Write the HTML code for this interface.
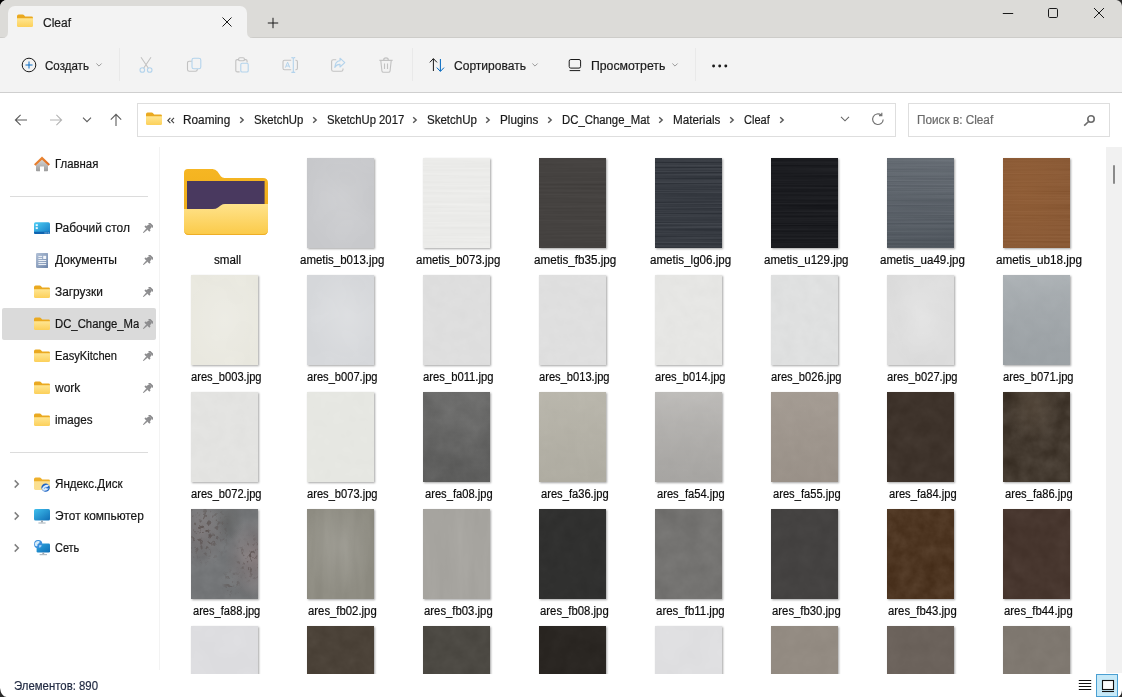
<!DOCTYPE html>
<html><head><meta charset="utf-8"><title>Cleaf</title>
<style>
*{box-sizing:border-box;margin:0;padding:0}
html,body{width:1122px;height:697px;overflow:hidden;background:#000}
body{font-family:"Liberation Sans",sans-serif;font-size:12px;color:#1b1b1b;position:relative}
.win{position:absolute;left:0;top:0;width:1122px;height:697px;background:#fff;border-radius:7px 0 0 0;overflow:hidden}
.abs{position:absolute}
.titlebar{position:absolute;left:0;top:0;width:1122px;height:38px;background:#dcdbd8;border-bottom:1px solid #cdccc9}
.tab{position:absolute;left:8px;top:6px;width:239px;height:32px;background:#f3f3f3;border-radius:7px 7px 0 0}
.toolbar{position:absolute;left:0;top:38px;width:1122px;height:54px;background:#f3f3f3}
.tbline{position:absolute;left:0;top:92px;width:1122px;height:1px;background:#cfcfcf}
.t{position:absolute;white-space:nowrap;line-height:14px;transform-origin:0 50%;-webkit-text-stroke:0.2px currentColor}
.sep{position:absolute;width:1px;background:#e9e9e9}
.addr{position:absolute;left:137px;top:103px;width:759px;height:34px;background:#fff;border:1px solid #dedede}
.search{position:absolute;left:908px;top:103px;width:202px;height:34px;background:#fff;border:1px solid #dedede}
.thumb{position:absolute;width:67px;height:90px;box-shadow:1px 1px 2px rgba(0,0,0,.36)}
.lbl{position:absolute;width:116px;text-align:center;white-space:nowrap;line-height:14px;font-size:12px;color:#111}
.side{position:absolute;white-space:nowrap;line-height:14px;font-size:12px;color:#111}
</style></head>
<body>
<div class="win">
<div class="titlebar"></div>
<div class="tab"></div>
<div class="toolbar"></div>
<div class="tbline"></div>
<svg class="abs" style="left:2px;top:32px;" width="6" height="6" viewBox="0 0 6 6"><path d="M6 0V6H0Q6 6 6 0Z" fill="#f3f3f3"/></svg>
<svg class="abs" style="left:247px;top:32px;" width="6" height="6" viewBox="0 0 6 6"><path d="M0 0V6H6Q0 6 0 0Z" fill="#f3f3f3"/></svg>
<svg class="abs" style="left:17px;top:14px;" width="16" height="14" viewBox="0 0 16 14"><defs><linearGradient id="fg" x1="0" y1="0" x2="0" y2="1"><stop offset="0" stop-color="#ffe692"/><stop offset="1" stop-color="#fcd05a"/></linearGradient></defs><path d="M0 2.2Q0 0.6 1.6 0.6H5.6Q6.6 0.6 7.3 1.5L8.2 2.6H14.6Q16 2.6 16 4V6H0Z" fill="#eaa920"/><path d="M0 4.2H16V11.7Q16 13 14.6 13H1.4Q0 13 0 11.7Z" fill="url(#fg)"/></svg>
<div class="t" style="left:42.6px;top:15.9px;font-size:12px;color:#1b1b1b;transform:scaleX(0.9994);">Cleaf</div>
<svg class="abs" style="left:221px;top:16px;" width="12" height="12" viewBox="0 0 12 12"><path d="M1.5 1.5L10.5 10.5M10.5 1.5L1.5 10.5" stroke="#1a1a1a" stroke-width="1" fill="none"/></svg>
<svg class="abs" style="left:266.5px;top:16.5px;" width="12" height="12" viewBox="0 0 12 12"><path d="M6 0.8V11.2M0.8 6H11.2" stroke="#1a1a1a" stroke-width="1" fill="none"/></svg>
<svg class="abs" style="left:1002px;top:8px;" width="12" height="12" viewBox="0 0 12 12"><path d="M0.8 5.5H11.2" stroke="#1a1a1a" stroke-width="1" fill="none"/></svg>
<svg class="abs" style="left:1047px;top:7px;" width="12" height="12" viewBox="0 0 12 12"><rect x="1.5" y="1.5" width="9" height="9" rx="1.2" stroke="#1a1a1a" stroke-width="1" fill="none"/></svg>
<svg class="abs" style="left:1093px;top:7px;" width="12" height="12" viewBox="0 0 12 12"><path d="M1 1L11 11M11 1L1 11" stroke="#1a1a1a" stroke-width="1" fill="none"/></svg>
<svg class="abs" style="left:19.5px;top:55.5px;" width="18" height="18" viewBox="0 0 18 18"><circle cx="9" cy="9" r="6.8" stroke="#1a1a1a" stroke-width="1" fill="none"/><path d="M9 5.5V12.5M5.5 9H12.5" stroke="#0a6cc4" stroke-width="1" fill="none"/></svg>
<div class="t" style="left:44.7px;top:59.0px;font-size:12px;color:#1b1b1b;transform:scaleX(0.9625);">Создать</div>
<svg class="abs" style="left:95.2px;top:62px;" width="8" height="6" viewBox="0 0 8 6"><path d="M1.4 1.5L4 4.1L6.6 1.5" stroke="#9a9a9a" stroke-width="1" fill="none"/></svg>
<div class="sep" style="left:119px;top:48px;height:33px"></div>
<svg class="abs" style="left:137px;top:56px;" width="18" height="18" viewBox="0 0 18 18"><path d="M4 1.2L11.4 12.2M14 1.2L6.6 12.2" stroke="#c2c2c2" stroke-width="1.1" fill="none"/><circle cx="5.3" cy="14" r="2.3" stroke="#b3d3ec" stroke-width="1.1" fill="none"/><circle cx="12.7" cy="14" r="2.3" stroke="#b3d3ec" stroke-width="1.1" fill="none"/></svg>
<svg class="abs" style="left:185px;top:56px;" width="18" height="18" viewBox="0 0 18 18"><path d="M6.8 5.2H4.2Q2.5 5.2 2.5 6.9V13.6Q2.5 15.3 4.2 15.3H10.6Q12.3 15.3 12.3 13.6V13" stroke="#c2c2c2" stroke-width="1.1" fill="none"/><rect x="7" y="2.2" width="8.8" height="10.6" rx="1.9" stroke="#b3d3ec" stroke-width="1.1" fill="none"/></svg>
<svg class="abs" style="left:233px;top:56px;" width="18" height="18" viewBox="0 0 18 18"><path d="M6 3.6H4.3Q2.8 3.6 2.8 5.1V14.4Q2.8 15.9 4.3 15.9H6.6M11 3.6H12.6Q14.1 3.6 14.1 5.1V6.4" stroke="#c2c2c2" stroke-width="1.1" fill="none"/><rect x="5.6" y="1.8" width="5.8" height="3" rx="1.3" stroke="#c2c2c2" stroke-width="1.1" fill="none"/><rect x="7.8" y="7.2" width="7.4" height="8.8" rx="1.3" stroke="#b3d3ec" stroke-width="1.1" fill="none"/></svg>
<svg class="abs" style="left:281px;top:56px;" width="18" height="18" viewBox="0 0 18 18"><path d="M10.2 4.2H3.6Q2 4.2 2 5.8V12.2Q2 13.8 3.6 13.8H10.2M14.4 4.2H15Q16.4 4.2 16.4 5.8V12.2Q16.4 13.8 15 13.8H14.4" stroke="#c2c2c2" stroke-width="1.1" fill="none"/><path d="M10.4 1.6H11.2Q12.3 1.6 12.3 2.8V15.2Q12.3 16.4 11.2 16.4H10.4M14.2 1.6H13.4Q12.3 1.6 12.3 2.8M14.2 16.4H13.4Q12.3 16.4 12.3 15.2" stroke="#b3d3ec" stroke-width="1.1" fill="none"/><path d="M4.4 11.6L6.6 6.2L8.8 11.6M5.1 10H8.1" stroke="#b3d3ec" stroke-width="1" fill="none"/></svg>
<svg class="abs" style="left:329px;top:56px;" width="18" height="18" viewBox="0 0 18 18"><path d="M7.2 3.8H4.4Q2.6 3.8 2.6 5.6V13.4Q2.6 15.2 4.4 15.2H12.2Q14 15.2 14 13.4V12.4" stroke="#c2c2c2" stroke-width="1.1" fill="none"/><path d="M11 2.2L15.8 6.6L11 11V8.4Q7.6 8.2 5.8 11.4Q6.2 5.2 11 4.8Z" stroke="#b3d3ec" stroke-width="1.1" fill="none" stroke-linejoin="round"/></svg>
<svg class="abs" style="left:377px;top:56px;" width="18" height="18" viewBox="0 0 18 18"><path d="M2.4 4.4H15.6M6.6 4.2Q6.6 1.9 9 1.9Q11.4 1.9 11.4 4.2M3.8 4.6L4.9 14.8Q5.1 16.2 6.5 16.2H11.5Q12.9 16.2 13.1 14.8L14.2 4.6M7.5 7.4V13M10.5 7.4V13" stroke="#c2c2c2" stroke-width="1.1" fill="none"/></svg>
<div class="sep" style="left:412px;top:48px;height:33px"></div>
<svg class="abs" style="left:428px;top:56px;" width="18" height="18" viewBox="0 0 18 18"><path d="M5.4 15V2.8M1.8 6.4L5.4 2.6L9 6.4" stroke="#1a1a1a" stroke-width="1" fill="none"/><path d="M12.4 3V15.2M8.8 11.6L12.4 15.4L16 11.6" stroke="#0067c0" stroke-width="1" fill="none"/></svg>
<div class="t" style="left:453.6px;top:59.0px;font-size:12px;color:#1b1b1b;transform:scaleX(1.0041);">Сортировать</div>
<svg class="abs" style="left:531px;top:62px;" width="8" height="6" viewBox="0 0 8 6"><path d="M1.4 1.5L4 4.1L6.6 1.5" stroke="#9a9a9a" stroke-width="1" fill="none"/></svg>
<svg class="abs" style="left:566px;top:56px;" width="18" height="18" viewBox="0 0 18 18"><rect x="3.2" y="3.5" width="11.4" height="8.6" rx="1.6" stroke="#1a1a1a" stroke-width="1" fill="none"/><path d="M3.6 14.6H14.2" stroke="#1a1a1a" stroke-width="1" fill="none"/></svg>
<div class="t" style="left:590.9px;top:59.1px;font-size:12px;color:#1b1b1b;transform:scaleX(1.0202);">Просмотреть</div>
<svg class="abs" style="left:671px;top:62px;" width="8" height="6" viewBox="0 0 8 6"><path d="M1.4 1.5L4 4.1L6.6 1.5" stroke="#9a9a9a" stroke-width="1" fill="none"/></svg>
<div class="sep" style="left:695px;top:48px;height:33px"></div>
<svg class="abs" style="left:711px;top:62.6px;" width="18" height="6" viewBox="0 0 18 6"><circle cx="2.6" cy="3" r="1.45" fill="#1a1a1a"/><circle cx="8.7" cy="3" r="1.45" fill="#1a1a1a"/><circle cx="14.8" cy="3" r="1.45" fill="#1a1a1a"/></svg>
<svg class="abs" style="left:14px;top:113px;" width="14" height="14" viewBox="0 0 14 14"><path d="M13 7H1.6M6.6 1.8L1.4 7L6.6 12.2" stroke="#5c5c5c" stroke-width="1.1" fill="none"/></svg>
<svg class="abs" style="left:49px;top:113px;" width="14" height="14" viewBox="0 0 14 14"><path d="M1 7H12.4M7.4 1.8L12.6 7L7.4 12.2" stroke="#b4b4b4" stroke-width="1.1" fill="none"/></svg>
<svg class="abs" style="left:81.5px;top:116px;" width="10" height="8" viewBox="0 0 10 8"><path d="M1 1.6L5 5.6L9 1.6" stroke="#5c5c5c" stroke-width="1.1" fill="none"/></svg>
<svg class="abs" style="left:108.5px;top:113.3px;" width="14" height="14" viewBox="0 0 14 14"><path d="M7 13V1.6M1.8 6.6L7 1.4L12.2 6.6" stroke="#5c5c5c" stroke-width="1.1" fill="none"/></svg>
<div class="addr"></div>
<div class="search"></div>
<svg class="abs" style="left:146px;top:112px;" width="16" height="14" viewBox="0 0 16 14"><defs><linearGradient id="fg" x1="0" y1="0" x2="0" y2="1"><stop offset="0" stop-color="#ffe692"/><stop offset="1" stop-color="#fcd05a"/></linearGradient></defs><path d="M0 2.2Q0 0.6 1.6 0.6H5.6Q6.6 0.6 7.3 1.5L8.2 2.6H14.6Q16 2.6 16 4V6H0Z" fill="#eaa920"/><path d="M0 4.2H16V11.7Q16 13 14.6 13H1.4Q0 13 0 11.7Z" fill="url(#fg)"/></svg>
<svg class="abs" style="left:167px;top:117px;" width="8" height="7" viewBox="0 0 8 7"><path d="M3.4 0.8L0.8 3.5L3.4 6.2M7 0.8L4.4 3.5L7 6.2" stroke="#444" stroke-width="1.1" fill="none"/></svg>
<div class="t" style="left:183.0px;top:112.7px;font-size:12px;color:#1b1b1b;transform:scaleX(0.9827);">Roaming</div>
<svg class="abs" style="left:239.29999999999998px;top:116.4px;" width="6" height="8" viewBox="0 0 6 8"><path d="M1.2 1.2L4.2 4L1.2 6.8" stroke="#555" stroke-width="1.4" fill="none"/></svg>
<div class="t" style="left:254.0px;top:112.7px;font-size:12px;color:#1b1b1b;transform:scaleX(0.9456);">SketchUp</div>
<svg class="abs" style="left:312.4px;top:116.4px;" width="6" height="8" viewBox="0 0 6 8"><path d="M1.2 1.2L4.2 4L1.2 6.8" stroke="#555" stroke-width="1.4" fill="none"/></svg>
<div class="t" style="left:326.6px;top:112.7px;font-size:12px;color:#1b1b1b;transform:scaleX(0.9407);">SketchUp 2017</div>
<svg class="abs" style="left:412.2px;top:116.4px;" width="6" height="8" viewBox="0 0 6 8"><path d="M1.2 1.2L4.2 4L1.2 6.8" stroke="#555" stroke-width="1.4" fill="none"/></svg>
<div class="t" style="left:426.6px;top:112.7px;font-size:12px;color:#1b1b1b;transform:scaleX(0.9610);">SketchUp</div>
<svg class="abs" style="left:485.09999999999997px;top:116.4px;" width="6" height="8" viewBox="0 0 6 8"><path d="M1.2 1.2L4.2 4L1.2 6.8" stroke="#555" stroke-width="1.4" fill="none"/></svg>
<div class="t" style="left:499.8px;top:112.7px;font-size:12px;color:#1b1b1b;transform:scaleX(0.9731);">Plugins</div>
<svg class="abs" style="left:546.6px;top:116.4px;" width="6" height="8" viewBox="0 0 6 8"><path d="M1.2 1.2L4.2 4L1.2 6.8" stroke="#555" stroke-width="1.4" fill="none"/></svg>
<div class="t" style="left:561.7px;top:112.7px;font-size:12px;color:#1b1b1b;transform:scaleX(0.9459);">DC_Change_Mat</div>
<svg class="abs" style="left:657.7px;top:116.4px;" width="6" height="8" viewBox="0 0 6 8"><path d="M1.2 1.2L4.2 4L1.2 6.8" stroke="#555" stroke-width="1.4" fill="none"/></svg>
<div class="t" style="left:672.9px;top:112.7px;font-size:12px;color:#1b1b1b;transform:scaleX(0.9736);">Materials</div>
<svg class="abs" style="left:729.0px;top:116.4px;" width="6" height="8" viewBox="0 0 6 8"><path d="M1.2 1.2L4.2 4L1.2 6.8" stroke="#555" stroke-width="1.4" fill="none"/></svg>
<div class="t" style="left:743.9px;top:112.7px;font-size:12px;color:#1b1b1b;transform:scaleX(0.9209);">Cleaf</div>
<svg class="abs" style="left:778.5px;top:116.4px;" width="6" height="8" viewBox="0 0 6 8"><path d="M1.2 1.2L4.2 4L1.2 6.8" stroke="#555" stroke-width="1.4" fill="none"/></svg>
<svg class="abs" style="left:840px;top:115px;" width="10" height="8" viewBox="0 0 10 8"><path d="M1 1.8L5 5.8L9 1.8" stroke="#666" stroke-width="1.1" fill="none"/></svg>
<svg class="abs" style="left:871px;top:112px;" width="14" height="14" viewBox="0 0 14 14"><path d="M12.2 7.4A5.3 5.3 0 1 1 10.4 3.2M10.8 0.8V3.6H8" stroke="#747474" stroke-width="1.2" fill="none"/></svg>
<div class="t" style="left:916.8px;top:112.7px;font-size:12px;color:#6b6b6b;transform:scaleX(0.9812);">Поиск в: Cleaf</div>
<svg class="abs" style="left:1083px;top:114px;" width="13" height="13" viewBox="0 0 13 13"><circle cx="8" cy="5" r="3.2" stroke="#6c6c6c" stroke-width="1.6" fill="none"/><path d="M5.6 7.5L1.2 11.7" stroke="#6c6c6c" stroke-width="1.6" fill="none"/></svg>
<div class="abs" style="left:159px;top:147px;width:1px;height:523px;background:#f3f3f3"></div>
<svg class="abs" style="left:34.2px;top:156.4px;" width="16" height="16" viewBox="0 0 16 16"><defs><linearGradient id="hb" x1="0" y1="0" x2="0" y2="1"><stop offset="0" stop-color="#d6d6d6"/><stop offset="1" stop-color="#9c9c9c"/></linearGradient><linearGradient id="hr" x1="0" y1="0" x2="1" y2="1"><stop offset="0" stop-color="#f0913a"/><stop offset="1" stop-color="#d9661f"/></linearGradient></defs><path d="M8 3.4L14 9.2V14.4Q14 15.2 13.2 15.2H10V10.6H6V15.2H2.8Q2 15.2 2 14.4V9.2Z" fill="url(#hb)"/><path d="M8 0.6L16 8.2L14.5 9.8L8 3.7L1.5 9.8L0 8.2Z" fill="url(#hr)"/></svg>
<div class="t" style="left:54.9px;top:157.0px;font-size:12px;color:#161616;transform:scaleX(0.9477);">Главная</div>
<div class="abs" style="left:10px;top:196px;width:138px;height:1px;background:#dcdcdc"></div>
<div class="abs" style="left:2px;top:308px;width:153.5px;height:31.6px;background:#dadada;border-radius:2px"></div>
<svg class="abs" style="left:34px;top:222px;" width="16" height="12.4" viewBox="0 0 16 12.4"><defs><linearGradient id="dg" x1="0" y1="0" x2="1" y2="1"><stop offset="0" stop-color="#4ccdf4"/><stop offset="1" stop-color="#1379c4"/></linearGradient></defs><rect x="0" y="0.3" width="16" height="11.8" rx="1.6" fill="url(#dg)"/><path d="M0 9.8H16V10.5Q16 12.1 14.4 12.1H1.6Q0 12.1 0 10.5Z" fill="#0f63b0"/><rect x="1.7" y="2.2" width="2.1" height="1.9" fill="#eaf8fe"/><rect x="1.7" y="5.2" width="2.1" height="1.9" fill="#eaf8fe"/><rect x="10.6" y="10.5" width="1" height="1" fill="#bfe6fa"/><rect x="12.4" y="10.5" width="1" height="1" fill="#bfe6fa"/><rect x="14.2" y="10.5" width="1" height="1" fill="#bfe6fa"/></svg>
<div class="t" style="left:54.9px;top:221.0px;font-size:12px;color:#161616;transform:scaleX(0.9943);">Рабочий стол</div>
<svg class="abs" style="left:140.8px;top:223.3px;" width="12" height="12" viewBox="0 0 12 12"><g transform="translate(6.9 5.1) rotate(45)" fill="#8c8c8e"><rect x="-3.1" y="-5.4" width="6.2" height="1.9" rx="0.5"/><path d="M-1.9 -3.6H1.9L2.5 0H-2.5Z"/><rect x="-3.6" y="-0.4" width="7.2" height="1.9" rx="0.7"/><path d="M-0.9 1.4H0.9L0.5 6.6H-0.5Z"/></g></svg>
<svg class="abs" style="left:35.8px;top:252.6px;" width="12.4" height="15" viewBox="0 0 12.4 15"><defs><linearGradient id="dc" x1="0" y1="0" x2="1" y2="1"><stop offset="0" stop-color="#b3c2d8"/><stop offset="1" stop-color="#6a82a7"/></linearGradient></defs><rect x="0" y="0" width="12.4" height="15" rx="1.3" fill="url(#dc)"/><rect x="7.2" y="2.8" width="3" height="3.2" fill="#f3f6fa"/><path d="M2.4 3.4H6.2M2.4 5.4H6.2M2.4 7.6H10.2M2.4 9.6H10.2M2.4 11.6H10.2" stroke="#f3f6fa" stroke-width="1"/></svg>
<div class="t" style="left:54.9px;top:253.0px;font-size:12px;color:#161616;transform:scaleX(1.0023);">Документы</div>
<svg class="abs" style="left:140.8px;top:255.3px;" width="12" height="12" viewBox="0 0 12 12"><g transform="translate(6.9 5.1) rotate(45)" fill="#8c8c8e"><rect x="-3.1" y="-5.4" width="6.2" height="1.9" rx="0.5"/><path d="M-1.9 -3.6H1.9L2.5 0H-2.5Z"/><rect x="-3.6" y="-0.4" width="7.2" height="1.9" rx="0.7"/><path d="M-0.9 1.4H0.9L0.5 6.6H-0.5Z"/></g></svg>
<svg class="abs" style="left:34px;top:284.6px;" width="16" height="14" viewBox="0 0 16 14"><defs><linearGradient id="fg" x1="0" y1="0" x2="0" y2="1"><stop offset="0" stop-color="#ffe692"/><stop offset="1" stop-color="#fcd05a"/></linearGradient></defs><path d="M0 2.2Q0 0.6 1.6 0.6H5.6Q6.6 0.6 7.3 1.5L8.2 2.6H14.6Q16 2.6 16 4V6H0Z" fill="#eaa920"/><path d="M0 4.2H16V11.7Q16 13 14.6 13H1.4Q0 13 0 11.7Z" fill="url(#fg)"/></svg>
<div class="t" style="left:54.9px;top:285.0px;font-size:12px;color:#161616;transform:scaleX(0.9897);">Загрузки</div>
<svg class="abs" style="left:140.8px;top:287.3px;" width="12" height="12" viewBox="0 0 12 12"><g transform="translate(6.9 5.1) rotate(45)" fill="#8c8c8e"><rect x="-3.1" y="-5.4" width="6.2" height="1.9" rx="0.5"/><path d="M-1.9 -3.6H1.9L2.5 0H-2.5Z"/><rect x="-3.6" y="-0.4" width="7.2" height="1.9" rx="0.7"/><path d="M-0.9 1.4H0.9L0.5 6.6H-0.5Z"/></g></svg>
<svg class="abs" style="left:34px;top:316.6px;" width="16" height="14" viewBox="0 0 16 14"><defs><linearGradient id="fg" x1="0" y1="0" x2="0" y2="1"><stop offset="0" stop-color="#ffe692"/><stop offset="1" stop-color="#fcd05a"/></linearGradient></defs><path d="M0 2.2Q0 0.6 1.6 0.6H5.6Q6.6 0.6 7.3 1.5L8.2 2.6H14.6Q16 2.6 16 4V6H0Z" fill="#eaa920"/><path d="M0 4.2H16V11.7Q16 13 14.6 13H1.4Q0 13 0 11.7Z" fill="url(#fg)"/></svg>
<div class="abs" style="left:55px;top:317px;width:84.2px;height:14px;overflow:hidden"><div class="t" style="left:0;top:0;color:#161616;transform:scaleX(0.9437)">DC_Change_Mat</div></div>
<svg class="abs" style="left:140.8px;top:319.3px;" width="12" height="12" viewBox="0 0 12 12"><g transform="translate(6.9 5.1) rotate(45)" fill="#8c8c8e"><rect x="-3.1" y="-5.4" width="6.2" height="1.9" rx="0.5"/><path d="M-1.9 -3.6H1.9L2.5 0H-2.5Z"/><rect x="-3.6" y="-0.4" width="7.2" height="1.9" rx="0.7"/><path d="M-0.9 1.4H0.9L0.5 6.6H-0.5Z"/></g></svg>
<svg class="abs" style="left:34px;top:348.6px;" width="16" height="14" viewBox="0 0 16 14"><defs><linearGradient id="fg" x1="0" y1="0" x2="0" y2="1"><stop offset="0" stop-color="#ffe692"/><stop offset="1" stop-color="#fcd05a"/></linearGradient></defs><path d="M0 2.2Q0 0.6 1.6 0.6H5.6Q6.6 0.6 7.3 1.5L8.2 2.6H14.6Q16 2.6 16 4V6H0Z" fill="#eaa920"/><path d="M0 4.2H16V11.7Q16 13 14.6 13H1.4Q0 13 0 11.7Z" fill="url(#fg)"/></svg>
<div class="t" style="left:54.9px;top:349.0px;font-size:12px;color:#161616;transform:scaleX(0.9295);">EasyKitchen</div>
<svg class="abs" style="left:140.8px;top:351.3px;" width="12" height="12" viewBox="0 0 12 12"><g transform="translate(6.9 5.1) rotate(45)" fill="#8c8c8e"><rect x="-3.1" y="-5.4" width="6.2" height="1.9" rx="0.5"/><path d="M-1.9 -3.6H1.9L2.5 0H-2.5Z"/><rect x="-3.6" y="-0.4" width="7.2" height="1.9" rx="0.7"/><path d="M-0.9 1.4H0.9L0.5 6.6H-0.5Z"/></g></svg>
<svg class="abs" style="left:34px;top:380.6px;" width="16" height="14" viewBox="0 0 16 14"><defs><linearGradient id="fg" x1="0" y1="0" x2="0" y2="1"><stop offset="0" stop-color="#ffe692"/><stop offset="1" stop-color="#fcd05a"/></linearGradient></defs><path d="M0 2.2Q0 0.6 1.6 0.6H5.6Q6.6 0.6 7.3 1.5L8.2 2.6H14.6Q16 2.6 16 4V6H0Z" fill="#eaa920"/><path d="M0 4.2H16V11.7Q16 13 14.6 13H1.4Q0 13 0 11.7Z" fill="url(#fg)"/></svg>
<div class="t" style="left:54.9px;top:381.0px;font-size:12px;color:#161616;transform:scaleX(0.9983);">work</div>
<svg class="abs" style="left:140.8px;top:383.3px;" width="12" height="12" viewBox="0 0 12 12"><g transform="translate(6.9 5.1) rotate(45)" fill="#8c8c8e"><rect x="-3.1" y="-5.4" width="6.2" height="1.9" rx="0.5"/><path d="M-1.9 -3.6H1.9L2.5 0H-2.5Z"/><rect x="-3.6" y="-0.4" width="7.2" height="1.9" rx="0.7"/><path d="M-0.9 1.4H0.9L0.5 6.6H-0.5Z"/></g></svg>
<svg class="abs" style="left:34px;top:412.6px;" width="16" height="14" viewBox="0 0 16 14"><defs><linearGradient id="fg" x1="0" y1="0" x2="0" y2="1"><stop offset="0" stop-color="#ffe692"/><stop offset="1" stop-color="#fcd05a"/></linearGradient></defs><path d="M0 2.2Q0 0.6 1.6 0.6H5.6Q6.6 0.6 7.3 1.5L8.2 2.6H14.6Q16 2.6 16 4V6H0Z" fill="#eaa920"/><path d="M0 4.2H16V11.7Q16 13 14.6 13H1.4Q0 13 0 11.7Z" fill="url(#fg)"/></svg>
<div class="t" style="left:54.9px;top:413.0px;font-size:12px;color:#161616;transform:scaleX(0.9693);">images</div>
<svg class="abs" style="left:140.8px;top:415.3px;" width="12" height="12" viewBox="0 0 12 12"><g transform="translate(6.9 5.1) rotate(45)" fill="#8c8c8e"><rect x="-3.1" y="-5.4" width="6.2" height="1.9" rx="0.5"/><path d="M-1.9 -3.6H1.9L2.5 0H-2.5Z"/><rect x="-3.6" y="-0.4" width="7.2" height="1.9" rx="0.7"/><path d="M-0.9 1.4H0.9L0.5 6.6H-0.5Z"/></g></svg>
<div class="abs" style="left:10px;top:452px;width:138px;height:1px;background:#dcdcdc"></div>
<svg class="abs" style="left:13px;top:478.7px;" width="7" height="10" viewBox="0 0 7 10"><path d="M1.7 1.4L5.3 5L1.7 8.6" stroke="#7e7e7e" stroke-width="1.5" fill="none"/></svg>
<svg class="abs" style="left:34px;top:476.6px;" width="16" height="15" viewBox="0 0 16 15"><path d="M0 2.2Q0 0.6 1.6 0.6H5.6Q6.6 0.6 7.3 1.5L8.2 2.6H14.6Q16 2.6 16 4V6H0Z" fill="#eeb02c"/><path d="M0 4.2H16V11.6Q16 13 14.6 13H1.4Q0 13 0 11.6Z" fill="#fbe091"/><circle cx="11.6" cy="10.6" r="4.2" fill="#1c63c4"/><path d="M8 11.4Q10.4 6.8 15.2 8Q13.6 10.4 11.2 10.8Q13.4 11.8 15 11.2Q12.6 14.6 9 13.4Q8 12.4 8 11.4Z" fill="#dcecfb"/><path d="M9.6 12.6Q11.4 11.6 12.6 9.6Q11 10 10 11Z" fill="#6db3f0"/></svg>
<div class="t" style="left:54.9px;top:477.0px;font-size:12px;color:#161616;transform:scaleX(0.9687);">Яндекс.Диск</div>
<svg class="abs" style="left:13px;top:510.7px;" width="7" height="10" viewBox="0 0 7 10"><path d="M1.7 1.4L5.3 5L1.7 8.6" stroke="#7e7e7e" stroke-width="1.5" fill="none"/></svg>
<svg class="abs" style="left:34px;top:509px;" width="16" height="15" viewBox="0 0 16 15"><defs><linearGradient id="mg" x1="0" y1="0" x2="1" y2="1"><stop offset="0" stop-color="#3fc0ee"/><stop offset="1" stop-color="#0f6db5"/></linearGradient></defs><rect x="0" y="0" width="16" height="11.4" rx="1.5" fill="url(#mg)"/><path d="M7 11.4H9V13.4H7Z" fill="#9aa4ad"/><path d="M4.4 13.4H11.6V14.6H4.4Z" fill="#b3bcc4"/></svg>
<div class="t" style="left:54.9px;top:509.0px;font-size:12px;color:#161616;transform:scaleX(0.9896);">Этот компьютер</div>
<svg class="abs" style="left:13px;top:542.7px;" width="7" height="10" viewBox="0 0 7 10"><path d="M1.7 1.4L5.3 5L1.7 8.6" stroke="#7e7e7e" stroke-width="1.5" fill="none"/></svg>
<svg class="abs" style="left:34px;top:540px;" width="16" height="16" viewBox="0 0 16 16"><defs><linearGradient id="ng" x1="0" y1="0" x2="1" y2="1"><stop offset="0" stop-color="#2fa8e0"/><stop offset="1" stop-color="#0f6db5"/></linearGradient></defs><rect x="2.6" y="3.4" width="13.4" height="9.2" rx="1.3" fill="url(#ng)"/><path d="M8.4 12.6H10.2V14H8.4Z" fill="#9aa4ad"/><path d="M5.6 14H13V15.2H5.6Z" fill="#b3bcc4"/><circle cx="4.2" cy="4.2" r="4.1" fill="#3a8fdc"/><path d="M1.6 2Q3.6 0.4 5.6 1.2Q6 3 4.2 3.8Q3 4.4 3.4 6Q2.2 6.6 1 5.6Q0.2 3.6 1.6 2Z" fill="#d6ecfa"/><path d="M5.2 5.2Q6.8 4.6 7.8 5.6Q7 7.4 5.4 7.8Q4.6 6.4 5.2 5.2Z" fill="#9fd3f5"/></svg>
<div class="t" style="left:54.7px;top:541.0px;font-size:12px;color:#161616;transform:scaleX(0.9100);">Сеть</div>
<div class="abs" style="left:160px;top:147px;width:946px;height:527px;overflow:hidden">
<svg class="abs" style="left:24px;top:22px;" width="84" height="66" viewBox="0 0 84 66"><defs><linearGradient id="bf1" x1="0" y1="0" x2="0" y2="1"><stop offset="0" stop-color="#ffe38c"/><stop offset="1" stop-color="#fbca48"/></linearGradient><linearGradient id="bf2" x1="0" y1="0" x2="0" y2="1"><stop offset="0" stop-color="#f6b623"/><stop offset="1" stop-color="#efae1a"/></linearGradient></defs><path d="M0 4Q0 0 4 0H28.5Q31.5 0 33.5 2.6L37 7.6Q38.2 9 40.5 9H79Q84 9 84 14V40H0Z" fill="url(#bf2)"/><path d="M3 12H80.6V40H3Z" fill="#49395f"/><path d="M0 40H29Q32 40 34 38.4L37 36.2Q38.6 35 41 35H84V61Q84 66 79 66H5Q0 66 0 61Z" fill="url(#bf1)"/><path d="M0 61Q0 66 5 66H79Q84 66 84 61V60.2Q84 65 79 65H5Q0 65 0 60.2Z" fill="#eeae26"/></svg>
<div class="t" style="left:53.7px;top:106.0px;font-size:12px;color:#0c0c0c;transform:scaleX(0.9673);">small</div>
<svg class="thumb" style="left:147px;top:11px" width="67" height="90" viewBox="0 0 67 90"><defs><filter id="f2" x="0" y="0" width="100%" height="100%" color-interpolation-filters="sRGB"><feTurbulence type="fractalNoise" baseFrequency="0.02 0.02" numOctaves="2" seed="3"/><feColorMatrix type="matrix" values="0.033 0 0 0 0.7639 0.033 0 0 0 0.7678 0.033 0 0 0 0.7796 0 0 0 0 1"/></filter><radialGradient id="g1" cx="0.55" cy="0.4" r="0.6"><stop offset="0" stop-color="#ffffff" stop-opacity="0.12"/><stop offset="1" stop-color="#ffffff" stop-opacity="0"/></radialGradient></defs><rect width="67" height="90" fill="#c7c8cb"/><rect width="67" height="90" filter="url(#f2)"/><rect width="67" height="90" fill="url(#g1)"/></svg>
<div class="t" style="left:140.4px;top:106.0px;font-size:12px;color:#0c0c0c;transform:scaleX(0.9573);">ametis_b013.jpg</div>
<svg class="thumb" style="left:263px;top:11px" width="67" height="90" viewBox="0 0 67 90"><defs><filter id="f3" x="0" y="0" width="100%" height="100%" color-interpolation-filters="sRGB"><feTurbulence type="fractalNoise" baseFrequency="0.006 0.35" numOctaves="3" seed="5"/><feColorMatrix type="matrix" values="0.048 0 0 0 0.8974 0.048 0 0 0 0.8974 0.048 0 0 0 0.8895 0 0 0 0 1"/></filter></defs><rect width="67" height="90" fill="#ebebe9"/><rect width="67" height="90" filter="url(#f3)"/></svg>
<div class="t" style="left:256.4px;top:106.0px;font-size:12px;color:#0c0c0c;transform:scaleX(0.9573);">ametis_b073.jpg</div>
<svg class="thumb" style="left:379px;top:11px" width="67" height="90" viewBox="0 0 67 90"><defs><filter id="f4" x="0" y="0" width="100%" height="100%" color-interpolation-filters="sRGB"><feTurbulence type="fractalNoise" baseFrequency="0.006 0.5" numOctaves="3" seed="7"/><feColorMatrix type="matrix" values="0.055 0 0 0 0.2431 0.055 0 0 0 0.2313 0.055 0 0 0 0.2235 0 0 0 0 1"/></filter></defs><rect width="67" height="90" fill="#454240"/><rect width="67" height="90" filter="url(#f4)"/></svg>
<div class="t" style="left:373.5px;top:106.0px;font-size:12px;color:#0c0c0c;transform:scaleX(0.9713);">ametis_fb35.jpg</div>
<svg class="thumb" style="left:495px;top:11px" width="67" height="90" viewBox="0 0 67 90"><defs><filter id="f5" x="0" y="0" width="100%" height="100%" color-interpolation-filters="sRGB"><feTurbulence type="fractalNoise" baseFrequency="0.004 0.55" numOctaves="3" seed="11"/><feColorMatrix type="matrix" values="0.165 0 0 0 0.1332 0.165 0 0 0 0.1489 0.165 0 0 0 0.1763 0 0 0 0 1"/></filter></defs><rect width="67" height="90" fill="#373b42"/><rect width="67" height="90" filter="url(#f5)"/></svg>
<div class="t" style="left:490.0px;top:106.0px;font-size:12px;color:#0c0c0c;transform:scaleX(0.9659);">ametis_lg06.jpg</div>
<svg class="thumb" style="left:611px;top:11px" width="67" height="90" viewBox="0 0 67 90"><defs><filter id="f6" x="0" y="0" width="100%" height="100%" color-interpolation-filters="sRGB"><feTurbulence type="fractalNoise" baseFrequency="0.004 0.55" numOctaves="3" seed="13"/><feColorMatrix type="matrix" values="0.099 0 0 0 0.0564 0.099 0 0 0 0.0603 0.099 0 0 0 0.0760 0 0 0 0 1"/></filter></defs><rect width="67" height="90" fill="#1b1c20"/><rect width="67" height="90" filter="url(#f6)"/></svg>
<div class="t" style="left:604.4px;top:106.0px;font-size:12px;color:#0c0c0c;transform:scaleX(0.9595);">ametis_u129.jpg</div>
<svg class="thumb" style="left:727px;top:11px" width="67" height="90" viewBox="0 0 67 90"><defs><filter id="f8" x="0" y="0" width="100%" height="100%" color-interpolation-filters="sRGB"><feTurbulence type="fractalNoise" baseFrequency="0.004 0.55" numOctaves="3" seed="17"/><feColorMatrix type="matrix" values="0.132 0 0 0 0.2830 0.132 0 0 0 0.3105 0.132 0 0 0 0.3418 0 0 0 0 1"/></filter><linearGradient id="g7" x1="0" y1="0" x2="0" y2="1"><stop offset="0" stop-color="#ffffff" stop-opacity="0.07"/><stop offset="1" stop-color="#000000" stop-opacity="0.08"/></linearGradient></defs><rect width="67" height="90" fill="#596068"/><rect width="67" height="90" filter="url(#f8)"/><rect width="67" height="90" fill="url(#g7)"/></svg>
<div class="t" style="left:720.1px;top:106.0px;font-size:12px;color:#0c0c0c;transform:scaleX(0.9641);">ametis_ua49.jpg</div>
<svg class="thumb" style="left:843px;top:11px" width="67" height="90" viewBox="0 0 67 90"><defs><filter id="f10" x="0" y="0" width="100%" height="100%" color-interpolation-filters="sRGB"><feTurbulence type="fractalNoise" baseFrequency="0.006 0.6" numOctaves="3" seed="19"/><feColorMatrix type="matrix" values="0.077 0 0 0 0.5027 0.077 0 0 0 0.3144 0.077 0 0 0 0.1733 0 0 0 0 1"/></filter><radialGradient id="g9" cx="0.3" cy="0.35" r="0.8"><stop offset="0" stop-color="#a86e3c" stop-opacity="0.2"/><stop offset="1" stop-color="#a86e3c" stop-opacity="0"/></radialGradient></defs><rect width="67" height="90" fill="#8a5a36"/><rect width="67" height="90" filter="url(#f10)"/><rect width="67" height="90" fill="url(#g9)"/></svg>
<div class="t" style="left:835.6px;top:106.0px;font-size:12px;color:#0c0c0c;transform:scaleX(0.9766);">ametis_ub18.jpg</div>
<svg class="thumb" style="left:31px;top:128px" width="67" height="90" viewBox="0 0 67 90"><defs><filter id="f12" x="0" y="0" width="100%" height="100%" color-interpolation-filters="sRGB"><feTurbulence type="fractalNoise" baseFrequency="0.03 0.03" numOctaves="2" seed="21"/><feColorMatrix type="matrix" values="0.022 0 0 0 0.9027 0.022 0 0 0 0.8988 0.022 0 0 0 0.8635 0 0 0 0 1"/></filter><radialGradient id="g11" cx="0.5" cy="0.5" r="0.6"><stop offset="0" stop-color="#ffffff" stop-opacity="0.18"/><stop offset="1" stop-color="#ffffff" stop-opacity="0"/></radialGradient></defs><rect width="67" height="90" fill="#e9e8df"/><rect width="67" height="90" filter="url(#f12)"/><rect width="67" height="90" fill="url(#g11)"/></svg>
<div class="t" style="left:31.3px;top:223.0px;font-size:12px;color:#0c0c0c;transform:scaleX(0.9269);">ares_b003.jpg</div>
<svg class="thumb" style="left:147px;top:128px" width="67" height="90" viewBox="0 0 67 90"><defs><filter id="f14" x="0" y="0" width="100%" height="100%" color-interpolation-filters="sRGB"><feTurbulence type="fractalNoise" baseFrequency="0.03 0.03" numOctaves="2" seed="23"/><feColorMatrix type="matrix" values="0.026 0 0 0 0.8221 0.026 0 0 0 0.8299 0.026 0 0 0 0.8417 0 0 0 0 1"/></filter><radialGradient id="g13" cx="0.6" cy="0.45" r="0.6"><stop offset="0" stop-color="#ffffff" stop-opacity="0.2"/><stop offset="1" stop-color="#ffffff" stop-opacity="0"/></radialGradient></defs><rect width="67" height="90" fill="#d5d7da"/><rect width="67" height="90" filter="url(#f14)"/><rect width="67" height="90" fill="url(#g13)"/></svg>
<div class="t" style="left:147.3px;top:223.0px;font-size:12px;color:#0c0c0c;transform:scaleX(0.9269);">ares_b007.jpg</div>
<svg class="thumb" style="left:263px;top:128px" width="67" height="90" viewBox="0 0 67 90"><defs><filter id="f15" x="0" y="0" width="100%" height="100%" color-interpolation-filters="sRGB"><feTurbulence type="fractalNoise" baseFrequency="0.09 0.09" numOctaves="3" seed="25"/><feColorMatrix type="matrix" values="0.020 0 0 0 0.8607 0.020 0 0 0 0.8607 0.020 0 0 0 0.8607 0 0 0 0 1"/></filter></defs><rect width="67" height="90" fill="#dedede"/><rect width="67" height="90" filter="url(#f15)"/></svg>
<div class="t" style="left:263.3px;top:223.0px;font-size:12px;color:#0c0c0c;transform:scaleX(0.9379);">ares_b011.jpg</div>
<svg class="thumb" style="left:379px;top:128px" width="67" height="90" viewBox="0 0 67 90"><defs><filter id="f16" x="0" y="0" width="100%" height="100%" color-interpolation-filters="sRGB"><feTurbulence type="fractalNoise" baseFrequency="0.09 0.09" numOctaves="3" seed="27"/><feColorMatrix type="matrix" values="0.020 0 0 0 0.8646 0.020 0 0 0 0.8646 0.020 0 0 0 0.8646 0 0 0 0 1"/></filter></defs><rect width="67" height="90" fill="#dfdfdf"/><rect width="67" height="90" filter="url(#f16)"/></svg>
<div class="t" style="left:379.4px;top:223.0px;font-size:12px;color:#0c0c0c;transform:scaleX(0.9269);">ares_b013.jpg</div>
<svg class="thumb" style="left:495px;top:128px" width="67" height="90" viewBox="0 0 67 90"><defs><filter id="f17" x="0" y="0" width="100%" height="100%" color-interpolation-filters="sRGB"><feTurbulence type="fractalNoise" baseFrequency="0.09 0.09" numOctaves="3" seed="29"/><feColorMatrix type="matrix" values="0.022 0 0 0 0.8910 0.022 0 0 0 0.8910 0.022 0 0 0 0.8831 0 0 0 0 1"/></filter></defs><rect width="67" height="90" fill="#e6e6e4"/><rect width="67" height="90" filter="url(#f17)"/></svg>
<div class="t" style="left:495.4px;top:223.0px;font-size:12px;color:#0c0c0c;transform:scaleX(0.9269);">ares_b014.jpg</div>
<svg class="thumb" style="left:611px;top:128px" width="67" height="90" viewBox="0 0 67 90"><defs><filter id="f18" x="0" y="0" width="100%" height="100%" color-interpolation-filters="sRGB"><feTurbulence type="fractalNoise" baseFrequency="0.08 0.08" numOctaves="3" seed="31"/><feColorMatrix type="matrix" values="0.031 0 0 0 0.8591 0.031 0 0 0 0.8630 0.031 0 0 0 0.8630 0 0 0 0 1"/></filter></defs><rect width="67" height="90" fill="#dfe0e0"/><rect width="67" height="90" filter="url(#f18)"/></svg>
<div class="t" style="left:611.4px;top:223.0px;font-size:12px;color:#0c0c0c;transform:scaleX(0.9269);">ares_b026.jpg</div>
<svg class="thumb" style="left:727px;top:128px" width="67" height="90" viewBox="0 0 67 90"><defs><filter id="f20" x="0" y="0" width="100%" height="100%" color-interpolation-filters="sRGB"><feTurbulence type="fractalNoise" baseFrequency="0.04 0.04" numOctaves="2" seed="33"/><feColorMatrix type="matrix" values="0.033 0 0 0 0.8462 0.033 0 0 0 0.8462 0.033 0 0 0 0.8462 0 0 0 0 1"/></filter><radialGradient id="g19" cx="0.5" cy="0.4" r="0.6"><stop offset="0" stop-color="#ffffff" stop-opacity="0.2"/><stop offset="1" stop-color="#ffffff" stop-opacity="0"/></radialGradient></defs><rect width="67" height="90" fill="#dcdcdc"/><rect width="67" height="90" filter="url(#f20)"/><rect width="67" height="90" fill="url(#g19)"/></svg>
<div class="t" style="left:727.4px;top:223.0px;font-size:12px;color:#0c0c0c;transform:scaleX(0.9269);">ares_b027.jpg</div>
<svg class="thumb" style="left:843px;top:128px" width="67" height="90" viewBox="0 0 67 90"><defs><filter id="f22" x="0" y="0" width="100%" height="100%" color-interpolation-filters="sRGB"><feTurbulence type="fractalNoise" baseFrequency="0.07 0.07" numOctaves="3" seed="35"/><feColorMatrix type="matrix" values="0.026 0 0 0 0.6299 0.026 0 0 0 0.6535 0.026 0 0 0 0.6692 0 0 0 0 1"/></filter><linearGradient id="g21" x1="0" y1="0" x2="0" y2="1"><stop offset="0" stop-color="#ffffff" stop-opacity="0.1"/><stop offset="1" stop-color="#000000" stop-opacity="0.05"/></linearGradient></defs><rect width="67" height="90" fill="#a4aaae"/><rect width="67" height="90" filter="url(#f22)"/><rect width="67" height="90" fill="url(#g21)"/></svg>
<div class="t" style="left:843.4px;top:223.0px;font-size:12px;color:#0c0c0c;transform:scaleX(0.9269);">ares_b071.jpg</div>
<svg class="thumb" style="left:31px;top:245px" width="67" height="90" viewBox="0 0 67 90"><defs><filter id="f23" x="0" y="0" width="100%" height="100%" color-interpolation-filters="sRGB"><feTurbulence type="fractalNoise" baseFrequency="0.09 0.09" numOctaves="3" seed="37"/><feColorMatrix type="matrix" values="0.020 0 0 0 0.8803 0.020 0 0 0 0.8803 0.020 0 0 0 0.8725 0 0 0 0 1"/></filter></defs><rect width="67" height="90" fill="#e3e3e1"/><rect width="67" height="90" filter="url(#f23)"/></svg>
<div class="t" style="left:31.3px;top:340.0px;font-size:12px;color:#0c0c0c;transform:scaleX(0.9269);">ares_b072.jpg</div>
<svg class="thumb" style="left:147px;top:245px" width="67" height="90" viewBox="0 0 67 90"><defs><filter id="f24" x="0" y="0" width="100%" height="100%" color-interpolation-filters="sRGB"><feTurbulence type="fractalNoise" baseFrequency="0.08 0.08" numOctaves="2" seed="39"/><feColorMatrix type="matrix" values="0.013 0 0 0 0.8954 0.013 0 0 0 0.8993 0.013 0 0 0 0.8797 0 0 0 0 1"/></filter></defs><rect width="67" height="90" fill="#e6e7e2"/><rect width="67" height="90" filter="url(#f24)"/></svg>
<div class="t" style="left:147.3px;top:340.0px;font-size:12px;color:#0c0c0c;transform:scaleX(0.9269);">ares_b073.jpg</div>
<svg class="thumb" style="left:263px;top:245px" width="67" height="90" viewBox="0 0 67 90"><defs><filter id="f26" x="0" y="0" width="100%" height="100%" color-interpolation-filters="sRGB"><feTurbulence type="fractalNoise" baseFrequency="0.05 0.05" numOctaves="4" seed="41"/><feColorMatrix type="matrix" values="0.088 0 0 0 0.3482 0.088 0 0 0 0.3482 0.088 0 0 0 0.3442 0 0 0 0 1"/></filter><linearGradient id="g25" x1="0" y1="0" x2="0" y2="1"><stop offset="0" stop-color="#ffffff" stop-opacity="0.05"/><stop offset="1" stop-color="#000000" stop-opacity="0.08"/></linearGradient></defs><rect width="67" height="90" fill="#646463"/><rect width="67" height="90" filter="url(#f26)"/><rect width="67" height="90" fill="url(#g25)"/></svg>
<div class="t" style="left:264.8px;top:340.0px;font-size:12px;color:#0c0c0c;transform:scaleX(0.9294);">ares_fa08.jpg</div>
<svg class="thumb" style="left:379px;top:245px" width="67" height="90" viewBox="0 0 67 90"><defs><filter id="f28" x="0" y="0" width="100%" height="100%" color-interpolation-filters="sRGB"><feTurbulence type="fractalNoise" baseFrequency="0.08 0.08" numOctaves="3" seed="43"/><feColorMatrix type="matrix" values="0.022 0 0 0 0.7027 0.022 0 0 0 0.6910 0.022 0 0 0 0.6478 0 0 0 0 1"/></filter><linearGradient id="g27" x1="0" y1="0" x2="0" y2="1"><stop offset="0" stop-color="#ffffff" stop-opacity="0.05"/><stop offset="1" stop-color="#000000" stop-opacity="0.04"/></linearGradient></defs><rect width="67" height="90" fill="#b6b3a8"/><rect width="67" height="90" filter="url(#f28)"/><rect width="67" height="90" fill="url(#g27)"/></svg>
<div class="t" style="left:380.8px;top:340.0px;font-size:12px;color:#0c0c0c;transform:scaleX(0.9294);">ares_fa36.jpg</div>
<svg class="thumb" style="left:495px;top:245px" width="67" height="90" viewBox="0 0 67 90"><defs><filter id="f30" x="0" y="0" width="100%" height="100%" color-interpolation-filters="sRGB"><feTurbulence type="fractalNoise" baseFrequency="0.08 0.08" numOctaves="3" seed="45"/><feColorMatrix type="matrix" values="0.022 0 0 0 0.6988 0.022 0 0 0 0.6910 0.022 0 0 0 0.6792 0 0 0 0 1"/></filter><linearGradient id="g29" x1="0" y1="0" x2="0" y2="1"><stop offset="0" stop-color="#ffffff" stop-opacity="0.12"/><stop offset="1" stop-color="#000000" stop-opacity="0.08"/></linearGradient></defs><rect width="67" height="90" fill="#b5b3b0"/><rect width="67" height="90" filter="url(#f30)"/><rect width="67" height="90" fill="url(#g29)"/></svg>
<div class="t" style="left:496.8px;top:340.0px;font-size:12px;color:#0c0c0c;transform:scaleX(0.9294);">ares_fa54.jpg</div>
<svg class="thumb" style="left:611px;top:245px" width="67" height="90" viewBox="0 0 67 90"><defs><filter id="f32" x="0" y="0" width="100%" height="100%" color-interpolation-filters="sRGB"><feTurbulence type="fractalNoise" baseFrequency="0.08 0.08" numOctaves="3" seed="47"/><feColorMatrix type="matrix" values="0.026 0 0 0 0.6143 0.026 0 0 0 0.5790 0.026 0 0 0 0.5437 0 0 0 0 1"/></filter><linearGradient id="g31" x1="0" y1="0" x2="0" y2="1"><stop offset="0" stop-color="#ffffff" stop-opacity="0.05"/><stop offset="1" stop-color="#000000" stop-opacity="0.04"/></linearGradient></defs><rect width="67" height="90" fill="#a0978e"/><rect width="67" height="90" filter="url(#f32)"/><rect width="67" height="90" fill="url(#g31)"/></svg>
<div class="t" style="left:612.8px;top:340.0px;font-size:12px;color:#0c0c0c;transform:scaleX(0.9294);">ares_fa55.jpg</div>
<svg class="thumb" style="left:727px;top:245px" width="67" height="90" viewBox="0 0 67 90"><defs><filter id="f33" x="0" y="0" width="100%" height="100%" color-interpolation-filters="sRGB"><feTurbulence type="fractalNoise" baseFrequency="0.07 0.07" numOctaves="3" seed="49"/><feColorMatrix type="matrix" values="0.055 0 0 0 0.2156 0.055 0 0 0 0.1725 0.055 0 0 0 0.1411 0 0 0 0 1"/></filter></defs><rect width="67" height="90" fill="#3e332b"/><rect width="67" height="90" filter="url(#f33)"/></svg>
<div class="t" style="left:728.8px;top:340.0px;font-size:12px;color:#0c0c0c;transform:scaleX(0.9294);">ares_fa84.jpg</div>
<svg class="thumb" style="left:843px;top:245px" width="67" height="90" viewBox="0 0 67 90"><defs><filter id="f35" x="0" y="0" width="100%" height="100%" color-interpolation-filters="sRGB"><feTurbulence type="fractalNoise" baseFrequency="0.06 0.06" numOctaves="4" seed="51"/><feColorMatrix type="matrix" values="0.132 0 0 0 0.1967 0.132 0 0 0 0.1575 0.132 0 0 0 0.1183 0 0 0 0 1"/></filter><radialGradient id="g34" cx="0.45" cy="0.15" r="0.4"><stop offset="0" stop-color="#7a6a58" stop-opacity="0.3"/><stop offset="1" stop-color="#7a6a58" stop-opacity="0"/></radialGradient></defs><rect width="67" height="90" fill="#43392f"/><rect width="67" height="90" filter="url(#f35)"/><rect width="67" height="90" fill="url(#g34)"/></svg>
<div class="t" style="left:844.8px;top:340.0px;font-size:12px;color:#0c0c0c;transform:scaleX(0.9294);">ares_fa86.jpg</div>
<svg class="thumb" style="left:31px;top:362px" width="67" height="90" viewBox="0 0 67 90"><defs><filter id="f52" x="0" y="0" width="100%" height="100%" color-interpolation-filters="sRGB"><feTurbulence type="fractalNoise" baseFrequency="0.045 0.045" numOctaves="4" seed="53"/><feColorMatrix type="matrix" values="0.110 0 0 0 0.3999 0.110 0 0 0 0.4077 0.110 0 0 0 0.4156 0 0 0 0 1"/></filter><filter id="rust" x="0" y="0" width="100%" height="100%" color-interpolation-filters="sRGB"><feTurbulence type="fractalNoise" baseFrequency="0.24 0.24" numOctaves="3" seed="4"/><feColorMatrix type="matrix" values="0 0 0 0 0.33  0 0 0 0 0.29  0 0 0 0 0.28  7 0 0 0 -3.9"/></filter><radialGradient id="rm1" cx="0.2" cy="0.25" r="0.42"><stop offset="0" stop-color="#fff"/><stop offset="1" stop-color="#000"/></radialGradient><radialGradient id="rm2" cx="0.9" cy="0.55" r="0.3"><stop offset="0" stop-color="#fff"/><stop offset="1" stop-color="#000"/></radialGradient><radialGradient id="rm3" cx="0.6" cy="0.82" r="0.18"><stop offset="0" stop-color="#bbb"/><stop offset="1" stop-color="#000"/></radialGradient><mask id="rmask"><rect width="67" height="90" fill="#000"/><rect width="67" height="90" fill="url(#rm1)"/><rect width="67" height="90" fill="url(#rm2)" style="mix-blend-mode:lighten"/><rect width="67" height="90" fill="url(#rm3)" style="mix-blend-mode:lighten"/></mask><radialGradient id="g53" cx="0.95" cy="0.55" r="0.45"><stop offset="0" stop-color="#a08484" stop-opacity="0.4"/><stop offset="1" stop-color="#a08484" stop-opacity="0"/></radialGradient><radialGradient id="g54" cx="0.15" cy="0.25" r="0.4"><stop offset="0" stop-color="#948080" stop-opacity="0.3"/><stop offset="1" stop-color="#948080" stop-opacity="0"/></radialGradient><radialGradient id="g55" cx="0.55" cy="0.12" r="0.25"><stop offset="0" stop-color="#4e4e4c" stop-opacity="0.45"/><stop offset="1" stop-color="#4e4e4c" stop-opacity="0"/></radialGradient></defs><rect width="67" height="90" fill="#747678"/><rect width="67" height="90" filter="url(#f52)"/><rect width="67" height="90" fill="url(#g53)"/><rect width="67" height="90" fill="url(#g54)"/><rect width="67" height="90" fill="url(#g55)"/><g mask="url(#rmask)" opacity="0.8"><rect width="67" height="90" filter="url(#rust)"/></g></svg>
<div class="t" style="left:32.9px;top:457.0px;font-size:12px;color:#0c0c0c;transform:scaleX(0.9253);">ares_fa88.jpg</div>
<svg class="thumb" style="left:147px;top:362px" width="67" height="90" viewBox="0 0 67 90"><defs><filter id="f37" x="0" y="0" width="100%" height="100%" color-interpolation-filters="sRGB"><feTurbulence type="fractalNoise" baseFrequency="0.07 0.01" numOctaves="3" seed="55"/><feColorMatrix type="matrix" values="0.077 0 0 0 0.5184 0.077 0 0 0 0.5105 0.077 0 0 0 0.4713 0 0 0 0 1"/></filter><radialGradient id="g36" cx="0.5" cy="0.4" r="0.55"><stop offset="0" stop-color="#ffffff" stop-opacity="0.13"/><stop offset="1" stop-color="#ffffff" stop-opacity="0"/></radialGradient></defs><rect width="67" height="90" fill="#8e8c82"/><rect width="67" height="90" filter="url(#f37)"/><rect width="67" height="90" fill="url(#g36)"/></svg>
<div class="t" style="left:148.2px;top:457.0px;font-size:12px;color:#0c0c0c;transform:scaleX(0.9445);">ares_fb02.jpg</div>
<svg class="thumb" style="left:263px;top:362px" width="67" height="90" viewBox="0 0 67 90"><defs><filter id="f38" x="0" y="0" width="100%" height="100%" color-interpolation-filters="sRGB"><feTurbulence type="fractalNoise" baseFrequency="0.07 0.01" numOctaves="3" seed="57"/><feColorMatrix type="matrix" values="0.055 0 0 0 0.6235 0.055 0 0 0 0.6156 0.055 0 0 0 0.5960 0 0 0 0 1"/></filter></defs><rect width="67" height="90" fill="#a6a49f"/><rect width="67" height="90" filter="url(#f38)"/></svg>
<div class="t" style="left:264.2px;top:457.0px;font-size:12px;color:#0c0c0c;transform:scaleX(0.9445);">ares_fb03.jpg</div>
<svg class="thumb" style="left:379px;top:362px" width="67" height="90" viewBox="0 0 67 90"><defs><filter id="f39" x="0" y="0" width="100%" height="100%" color-interpolation-filters="sRGB"><feTurbulence type="fractalNoise" baseFrequency="0.08 0.08" numOctaves="3" seed="59"/><feColorMatrix type="matrix" values="0.026 0 0 0 0.1750 0.026 0 0 0 0.1750 0.026 0 0 0 0.1711 0 0 0 0 1"/></filter></defs><rect width="67" height="90" fill="#30302f"/><rect width="67" height="90" filter="url(#f39)"/></svg>
<div class="t" style="left:380.2px;top:457.0px;font-size:12px;color:#0c0c0c;transform:scaleX(0.9445);">ares_fb08.jpg</div>
<svg class="thumb" style="left:495px;top:362px" width="67" height="90" viewBox="0 0 67 90"><defs><filter id="f40" x="0" y="0" width="100%" height="100%" color-interpolation-filters="sRGB"><feTurbulence type="fractalNoise" baseFrequency="0.045 0.045" numOctaves="4" seed="61"/><feColorMatrix type="matrix" values="0.077 0 0 0 0.4164 0.077 0 0 0 0.4125 0.077 0 0 0 0.4046 0 0 0 0 1"/></filter></defs><rect width="67" height="90" fill="#747371"/><rect width="67" height="90" filter="url(#f40)"/></svg>
<div class="t" style="left:496.2px;top:457.0px;font-size:12px;color:#0c0c0c;transform:scaleX(0.9562);">ares_fb11.jpg</div>
<svg class="thumb" style="left:611px;top:362px" width="67" height="90" viewBox="0 0 67 90"><defs><filter id="f41" x="0" y="0" width="100%" height="100%" color-interpolation-filters="sRGB"><feTurbulence type="fractalNoise" baseFrequency="0.07 0.07" numOctaves="3" seed="63"/><feColorMatrix type="matrix" values="0.033 0 0 0 0.2502 0.033 0 0 0 0.2423 0.033 0 0 0 0.2384 0 0 0 0 1"/></filter></defs><rect width="67" height="90" fill="#444241"/><rect width="67" height="90" filter="url(#f41)"/></svg>
<div class="t" style="left:612.2px;top:457.0px;font-size:12px;color:#0c0c0c;transform:scaleX(0.9445);">ares_fb30.jpg</div>
<svg class="thumb" style="left:727px;top:362px" width="67" height="90" viewBox="0 0 67 90"><defs><filter id="f42" x="0" y="0" width="100%" height="100%" color-interpolation-filters="sRGB"><feTurbulence type="fractalNoise" baseFrequency="0.08 0.08" numOctaves="4" seed="65"/><feColorMatrix type="matrix" values="0.099 0 0 0 0.2525 0.099 0 0 0 0.1583 0.099 0 0 0 0.0799 0 0 0 0 1"/></filter></defs><rect width="67" height="90" fill="#4d3521"/><rect width="67" height="90" filter="url(#f42)"/></svg>
<div class="t" style="left:728.2px;top:457.0px;font-size:12px;color:#0c0c0c;transform:scaleX(0.9445);">ares_fb43.jpg</div>
<svg class="thumb" style="left:843px;top:362px" width="67" height="90" viewBox="0 0 67 90"><defs><filter id="f43" x="0" y="0" width="100%" height="100%" color-interpolation-filters="sRGB"><feTurbulence type="fractalNoise" baseFrequency="0.06 0.06" numOctaves="3" seed="67"/><feColorMatrix type="matrix" values="0.066 0 0 0 0.2454 0.066 0 0 0 0.1788 0.066 0 0 0 0.1474 0 0 0 0 1"/></filter></defs><rect width="67" height="90" fill="#47362e"/><rect width="67" height="90" filter="url(#f43)"/></svg>
<div class="t" style="left:844.2px;top:457.0px;font-size:12px;color:#0c0c0c;transform:scaleX(0.9445);">ares_fb44.jpg</div>
<svg class="thumb" style="left:31px;top:479px" width="67" height="90" viewBox="0 0 67 90"><defs><filter id="f44" x="0" y="0" width="100%" height="100%" color-interpolation-filters="sRGB"><feTurbulence type="fractalNoise" baseFrequency="0.04 0.04" numOctaves="2" seed="69"/><feColorMatrix type="matrix" values="0.026 0 0 0 0.8535 0.026 0 0 0 0.8535 0.026 0 0 0 0.8652 0 0 0 0 1"/></filter></defs><rect width="67" height="90" fill="#dddde0"/><rect width="67" height="90" filter="url(#f44)"/></svg>
<svg class="thumb" style="left:147px;top:479px" width="67" height="90" viewBox="0 0 67 90"><defs><filter id="f45" x="0" y="0" width="100%" height="100%" color-interpolation-filters="sRGB"><feTurbulence type="fractalNoise" baseFrequency="0.07 0.07" numOctaves="3" seed="71"/><feColorMatrix type="matrix" values="0.055 0 0 0 0.2666 0.055 0 0 0 0.2313 0.055 0 0 0 0.1921 0 0 0 0 1"/></filter></defs><rect width="67" height="90" fill="#4b4238"/><rect width="67" height="90" filter="url(#f45)"/></svg>
<svg class="thumb" style="left:263px;top:479px" width="67" height="90" viewBox="0 0 67 90"><defs><filter id="f46" x="0" y="0" width="100%" height="100%" color-interpolation-filters="sRGB"><feTurbulence type="fractalNoise" baseFrequency="0.07 0.07" numOctaves="3" seed="73"/><feColorMatrix type="matrix" values="0.055 0 0 0 0.2705 0.055 0 0 0 0.2588 0.055 0 0 0 0.2352 0 0 0 0 1"/></filter></defs><rect width="67" height="90" fill="#4c4943"/><rect width="67" height="90" filter="url(#f46)"/></svg>
<svg class="thumb" style="left:379px;top:479px" width="67" height="90" viewBox="0 0 67 90"><defs><filter id="f47" x="0" y="0" width="100%" height="100%" color-interpolation-filters="sRGB"><feTurbulence type="fractalNoise" baseFrequency="0.07 0.07" numOctaves="3" seed="75"/><feColorMatrix type="matrix" values="0.033 0 0 0 0.1482 0.033 0 0 0 0.1325 0.033 0 0 0 0.1168 0 0 0 0 1"/></filter></defs><rect width="67" height="90" fill="#2a2622"/><rect width="67" height="90" filter="url(#f47)"/></svg>
<svg class="thumb" style="left:495px;top:479px" width="67" height="90" viewBox="0 0 67 90"><defs><filter id="f48" x="0" y="0" width="100%" height="100%" color-interpolation-filters="sRGB"><feTurbulence type="fractalNoise" baseFrequency="0.04 0.04" numOctaves="2" seed="77"/><feColorMatrix type="matrix" values="0.026 0 0 0 0.8613 0.026 0 0 0 0.8613 0.026 0 0 0 0.8692 0 0 0 0 1"/></filter></defs><rect width="67" height="90" fill="#dfdfe1"/><rect width="67" height="90" filter="url(#f48)"/></svg>
<svg class="thumb" style="left:611px;top:479px" width="67" height="90" viewBox="0 0 67 90"><defs><filter id="f49" x="0" y="0" width="100%" height="100%" color-interpolation-filters="sRGB"><feTurbulence type="fractalNoise" baseFrequency="0.07 0.07" numOctaves="3" seed="79"/><feColorMatrix type="matrix" values="0.026 0 0 0 0.5633 0.026 0 0 0 0.5319 0.026 0 0 0 0.4966 0 0 0 0 1"/></filter></defs><rect width="67" height="90" fill="#938b82"/><rect width="67" height="90" filter="url(#f49)"/></svg>
<svg class="thumb" style="left:727px;top:479px" width="67" height="90" viewBox="0 0 67 90"><defs><filter id="f50" x="0" y="0" width="100%" height="100%" color-interpolation-filters="sRGB"><feTurbulence type="fractalNoise" baseFrequency="0.07 0.07" numOctaves="3" seed="81"/><feColorMatrix type="matrix" values="0.033 0 0 0 0.4031 0.033 0 0 0 0.3678 0.033 0 0 0 0.3404 0 0 0 0 1"/></filter></defs><rect width="67" height="90" fill="#6b625b"/><rect width="67" height="90" filter="url(#f50)"/></svg>
<svg class="thumb" style="left:843px;top:479px" width="67" height="90" viewBox="0 0 67 90"><defs><filter id="f51" x="0" y="0" width="100%" height="100%" color-interpolation-filters="sRGB"><feTurbulence type="fractalNoise" baseFrequency="0.07 0.07" numOctaves="3" seed="83"/><feColorMatrix type="matrix" values="0.033 0 0 0 0.4815 0.033 0 0 0 0.4541 0.033 0 0 0 0.4227 0 0 0 0 1"/></filter></defs><rect width="67" height="90" fill="#7f7870"/><rect width="67" height="90" filter="url(#f51)"/></svg>
</div>
<div class="abs" style="left:1106px;top:147px;width:16px;height:526px;background:#f1f1f1"></div>
<div class="abs" style="left:1113px;top:165px;width:2px;height:19px;background:#8a8a8a;border-radius:1px"></div>
<div class="t" style="left:14.3px;top:679.0px;font-size:12px;color:#1f2840;transform:scaleX(0.9485);">Элементов: 890</div>
<svg class="abs" style="left:1078px;top:679px;" width="14" height="12" viewBox="0 0 14 12"><path d="M0.8 1.5H13.2M0.8 4.5H13.2M0.8 7.5H13.2M0.8 10.5H13.2" stroke="#111" stroke-width="1.1"/></svg>
<div class="abs" style="left:1096px;top:674px;width:22px;height:23px;background:#c6e9f8;border:1px solid #4a9fd2"></div>
<svg class="abs" style="left:1101px;top:679px;" width="14" height="14" viewBox="0 0 14 14"><rect x="1.5" y="1.5" width="11" height="9" stroke="#111" stroke-width="1.1" fill="#fcfcfc"/><path d="M1 12.5H13" stroke="#111" stroke-width="1.1"/></svg>
<svg class="abs" style="left:1114px;top:689px;" width="8" height="8" viewBox="0 0 8 8"><path d="M8 1.5V8H3.5Q7.4 7.4 8 1.5Z" fill="#2a2a2a"/></svg>
<svg class="abs" style="left:0px;top:688px;" width="8" height="9" viewBox="0 0 8 9"><path d="M0 0V9H6.5Q1 8.2 0 0Z" fill="#2a2a2a"/></svg>
<svg class="abs" style="left:1114px;top:0px;" width="8" height="8" viewBox="0 0 8 8"><path d="M2.5 0H8V6Q7.4 0.8 2.5 0Z" fill="#2a2a2a"/></svg>
</div>
</body></html>
